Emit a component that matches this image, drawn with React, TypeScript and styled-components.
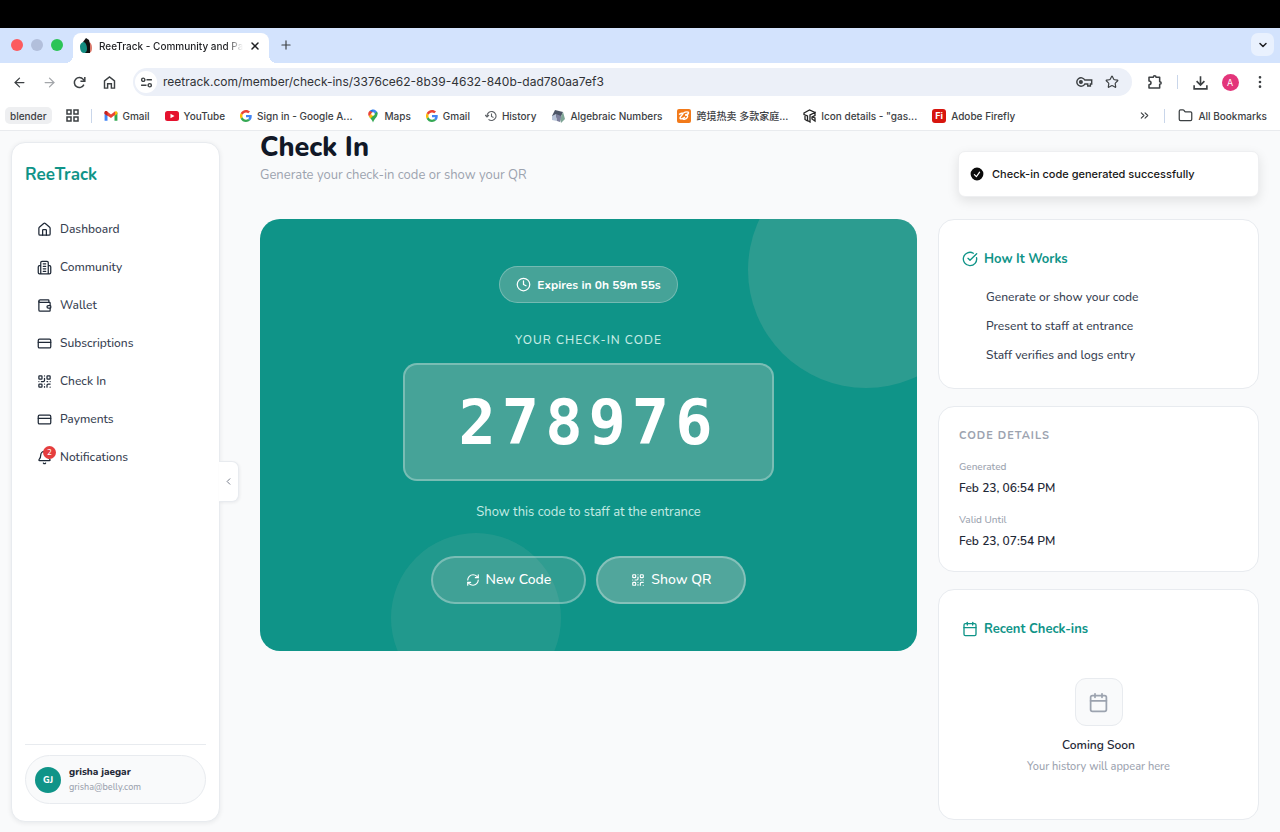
import React from "react";
import styled, { createGlobalStyle } from "styled-components";
import {
  ArrowLeft, ArrowRight, Bell, Calendar, ChevronDown, ChevronLeft, ChevronsRight, CircleCheckBig, Clock,
  CreditCard, EllipsisVertical, Folder, House, Plus, QrCode, RefreshCw, Star, Wallet, X,
} from "lucide-react";

const teal = "#0f9488";
const ink = "#1f2937";
const muted = "#9ca3af";
const line = "#e8ebef";
const glass = "255, 215, 207";

const GlobalStyle = createGlobalStyle`
  *, *::before, *::after { box-sizing: border-box; }
  body { margin: 0; background: #f9fafb; color: ${ink}; font: 500 12px/20px Nunito, Lato, sans-serif; }
  h1, h2, p, ul, ol, dl, dd { margin: 0; padding: 0; }
  ul, ol { list-style: none; }
  button, input { font: inherit; color: inherit; border: 0; background: none; padding: 0; }
  button { cursor: pointer; }
  a { color: inherit; text-decoration: none; }
  svg { flex: none; display: block; }
`;

const Screen = styled.div`
  min-height: 100vh;
  display: flex;
  flex-direction: column;
`;

/* ---------- browser window ---------- */
const Browser = styled.header`
  font-family: Inter, "Noto Sans CJK SC", sans-serif;
  font-weight: 400;
  color: #3c4043;
  background: #fff;
  border-bottom: 1px solid #e9ebee;
`;
const MenuBar = styled.div`
  height: 28px;
  background: #000;
`;
const TabStrip = styled.div`
  height: 35px;
  padding: 5px 6px 0 11px;
  display: flex;
  background: #d3e3fd;
`;
const Lights = styled.div`
  display: flex;
  gap: 8px;
  padding-top: 6px;
  margin-right: 10px;
`;
const Light = styled.span<{ $color: string }>`
  width: 12px;
  height: 12px;
  border-radius: 50%;
  background: ${(p) => p.$color};
`;
const Tab = styled.div`
  position: relative;
  width: 196px;
  height: 30px;
  padding: 0 8px 4px 6px;
  display: flex;
  align-items: center;
  gap: 6px;
  color: #1f2023;
  font-size: 10px;
  font-weight: 500;
  background: #fff;
  border-radius: 8px 8px 0 0;
  &::before, &::after {
    content: "";
    position: absolute;
    bottom: 0;
    width: 8px;
    height: 8px;
  }
  &::before { right: 100%; background: radial-gradient(circle at 0 0, transparent 8px, #fff 8px); }
  &::after { left: 100%; background: radial-gradient(circle at 100% 0, transparent 8px, #fff 8px); }
`;
const TabTitle = styled.span`
  flex: 1;
  min-width: 0;
  white-space: nowrap;
  mask-image: linear-gradient(to right, #000 88%, transparent);
`;
const PlainButton = styled.button`
  display: grid;
  place-items: center;
`;
const NewTab = styled(PlainButton)`
  width: 24px;
  height: 24px;
  margin-left: 5px;
`;
const TabSearch = styled(PlainButton)`
  width: 23px;
  height: 23px;
  margin-left: auto;
  color: #1f2023;
  background: #e9f1fe;
  border-radius: 7px;
`;
const Toolbar = styled.div`
  height: 38px;
  padding: 0 5px 0 4px;
  display: flex;
  align-items: center;
`;
const ToolButton = styled.button<{ $dim?: boolean }>`
  width: 30px;
  height: 28px;
  display: grid;
  place-items: center;
  color: ${(p) => (p.$dim ? "#a3a6aa" : "#3c4043")};
`;
const AddressBar = styled.div`
  flex: 1;
  height: 28px;
  margin: 0 8px 0 9px;
  padding: 0 7px 0 2px;
  display: flex;
  align-items: center;
  background: #ecf0f8;
  border-radius: 14px;
`;
const SiteInfo = styled(PlainButton)`
  width: 22px;
  height: 22px;
  margin-right: 6px;
  background: #fff;
  border-radius: 50%;
`;
const Address = styled.input`
  flex: 1;
  min-width: 0;
  color: #303236;
  font-size: 12px;
  line-height: 20px;
  outline: none;
`;
const AddressAction = styled(PlainButton)`
  width: 27px;
  height: 24px;
`;
const Rule = styled.span`
  width: 1px;
  height: 14px;
  margin: 0 7px;
  background: #c9d6ea;
`;
const ProfileDot = styled.span`
  width: 17px;
  height: 17px;
  display: grid;
  place-items: center;
  color: #fff;
  font-size: 9px;
  line-height: 17px;
  background: #e3357a;
  border-radius: 50%;
`;
const BookmarkBar = styled.nav`
  height: 29px;
  padding: 0 13px 0 5px;
  display: flex;
  align-items: center;
  font-size: 10px;
  font-weight: 500;
  line-height: 16px;
  white-space: nowrap;
`;
const GroupChip = styled.button`
  height: 17px;
  padding: 0 5px;
  margin-right: 14px;
  background: #eeeff1;
  border-radius: 5px;
`;
const AppsButton = styled(PlainButton)`
  margin-right: 5px;
`;
const BookmarkList = styled.ul`
  display: flex;
  gap: 15px;
  margin-left: 5px;
`;
const Bookmark = styled.a`
  display: flex;
  align-items: center;
  gap: 5px;
`;
const BarEnd = styled.div`
  margin-left: auto;
  display: flex;
  align-items: center;
  gap: 6px;
`;

/* ---------- application ---------- */
const Page = styled.div`
  position: relative;
  flex: 1;
  padding: 11px 21px 10px 11px;
  display: flex;
  gap: 40px;
`;
const Sidebar = styled.aside`
  position: relative;
  flex: none;
  width: 209px;
  padding: 22px 13px 17px;
  display: flex;
  flex-direction: column;
  background: #fff;
  border: 1px solid ${line};
  border-radius: 14px;
  box-shadow: 0 1px 5px rgba(15, 23, 42, 0.08);
`;
const Brand = styled.a`
  color: ${teal};
  font-size: 17px;
  line-height: 20px;
  font-weight: 700;
`;
const NavList = styled.ul`
  margin-top: 25px;
`;
const NavLink = styled.a`
  height: 38px;
  padding-left: 12px;
  display: flex;
  align-items: center;
  gap: 8px;
  color: #374151;
  svg { color: ${ink}; }
`;
const BellBox = styled.span`
  position: relative;
`;
const Count = styled.span`
  position: absolute;
  top: -4px;
  right: -4px;
  width: 13px;
  height: 13px;
  color: #fff;
  font-size: 8px;
  line-height: 13px;
  text-align: center;
  background: #e53e3e;
  border-radius: 50%;
`;
const CollapseButton = styled.button`
  position: absolute;
  left: 100%;
  top: 318px;
  width: 20px;
  height: 41px;
  display: grid;
  place-items: center;
  color: #6b7280;
  background: #fff;
  border: 1px solid ${line};
  border-left: 0;
  border-radius: 0 7px 7px 0;
  box-shadow: 1px 1px 3px rgba(15, 23, 42, 0.06);
`;
const Account = styled.div`
  margin-top: auto;
  padding-top: 10px;
  border-top: 1px solid ${line};
`;
const AccountButton = styled.button`
  width: 100%;
  height: 49px;
  padding: 0 9px;
  display: flex;
  align-items: center;
  gap: 8px;
  text-align: left;
  background: #f9fafb;
  border: 1px solid ${line};
  border-radius: 25px;
`;
const Avatar = styled.span`
  width: 26px;
  height: 26px;
  color: #fff;
  font-size: 9px;
  font-weight: 800;
  line-height: 26px;
  text-align: center;
  background: ${teal};
  border-radius: 50%;
`;
const AccountName = styled.span`
  display: block;
  font-size: 10px;
  line-height: 15px;
  font-weight: 800;
`;
const AccountMail = styled.span`
  display: block;
  color: ${muted};
  font-size: 9px;
  line-height: 15px;
`;
const Main = styled.main`
  flex: 1;
  min-width: 0;
`;
const Title = styled.h1`
  margin-top: -10px;
  color: #111827;
  font-size: 27px;
  line-height: 32px;
  font-weight: 800;
`;
const Subtitle = styled.p`
  margin-top: 1px;
  color: ${muted};
  font-size: 13px;
  font-weight: 400;
`;
const Columns = styled.div`
  margin-top: 34px;
  display: grid;
  grid-template-columns: minmax(0, 1fr) 321px;
  gap: 21px;
  align-items: start;
`;
const Hero = styled.section`
  position: relative;
  overflow: hidden;
  padding: 47px 20px;
  display: flex;
  flex-direction: column;
  align-items: center;
  color: #fff;
  background: ${teal};
  border-radius: 20px;
  > * { position: relative; }
`;
const Bubble = styled.span<{ $corner: "top" | "bottom" }>`
  && { position: absolute; }
  border-radius: 50%;
  ${(p) =>
    p.$corner === "top"
      ? `top: -67px; right: -67px; width: 236px; height: 236px; background: rgba(${glass}, 0.12);`
      : `bottom: -52px; left: 20%; width: 170px; height: 170px; background: rgba(${glass}, 0.08);`}
`;
const Expiry = styled.p`
  height: 37px;
  padding: 0 16px;
  display: flex;
  align-items: center;
  gap: 6px;
  font-weight: 700;
  background: rgba(${glass}, 0.23);
  border: 1px solid rgba(255, 255, 255, 0.25);
  border-radius: 19px;
`;
const CodeLabel = styled.p`
  margin-top: 27px;
  color: #c5ebe4;
  letter-spacing: 1px;
`;
const Code = styled.output`
  margin-top: 13px;
  padding: 22px 54px 20px;
  font: 700 62px/72px "DejaVu Sans Mono", monospace;
  letter-spacing: 6px;
  background: rgba(${glass}, 0.23);
  border: 2px solid rgba(255, 255, 255, 0.28);
  border-radius: 14px;
`;
const Hint = styled.p`
  margin-top: 21px;
  color: #c5ebe4;
  font-size: 13px;
  font-weight: 400;
`;
const Actions = styled.div`
  margin-top: 34px;
  display: flex;
  gap: 10px;
`;
const ActionButton = styled.button<{ $strong?: boolean }>`
  height: 48px;
  padding: 0 33px;
  display: flex;
  align-items: center;
  gap: 6px;
  font-size: 14px;
  background: rgba(${glass}, ${(p) => (p.$strong ? 0.28 : 0.14)});
  border: 2px solid rgba(255, 255, 255, 0.3);
  border-radius: 24px;
`;
const Aside = styled.div`
  display: grid;
  gap: 17px;
`;
const Card = styled.section`
  padding: 29px 23px 23px;
  background: #fff;
  border: 1px solid ${line};
  border-radius: 16px;
`;
const DetailCard = styled(Card)`
  padding: 19px 20px 20px;
`;
const CardTitle = styled.h2`
  display: flex;
  align-items: center;
  gap: 6px;
  color: ${teal};
  font-size: 13px;
  line-height: 20px;
  font-weight: 700;
`;
const Steps = styled.ol`
  margin-top: 18px;
  padding-left: 24px;
  display: grid;
  gap: 9px;
  color: #374151;
`;
const DetailTitle = styled.h2`
  color: ${muted};
  font-size: 11px;
  line-height: 20px;
  font-weight: 700;
  letter-spacing: 1px;
`;
const Details = styled.dl`
  margin-top: 12px;
  dt { color: ${muted}; font-size: 10px; line-height: 18px; }
  dd { margin-top: 2px; font-weight: 600; }
  dd + dt { margin-top: 13px; }
`;
const Empty = styled.div`
  padding: 39px 0 19px;
  display: flex;
  flex-direction: column;
  align-items: center;
`;
const EmptyIcon = styled.div`
  width: 48px;
  height: 48px;
  display: grid;
  place-items: center;
  color: ${muted};
  background: #f9fafb;
  border: 1px solid ${line};
  border-radius: 11px;
`;
const EmptyTitle = styled.p`
  margin-top: 9px;
  font-weight: 600;
`;
const EmptyText = styled.p`
  margin-top: 2px;
  color: ${muted};
  font-size: 11px;
`;
const Toast = styled.div`
  position: absolute;
  top: 20px;
  right: 21px;
  width: 301px;
  height: 46px;
  padding: 0 10px;
  display: flex;
  align-items: center;
  gap: 7px;
  color: #171717;
  font: 500 11px/18px Inter, sans-serif;
  background: #fff;
  border: 1px solid #eeeff1;
  border-radius: 7px;
  box-shadow: 0 4px 12px rgba(0, 0, 0, 0.1);
`;

/* ---------- drawings ---------- */
const SiteLogo = () => (
  <svg width="14" height="16" viewBox="0 0 14 16">
    <path d="M9 4c3 0 4 3 4 6 0 3-1 5-4 5z" fill="#d9796b" />
    <path d="M7 0l3 2 1 4v9H6L4 4z" fill="#111" />
    <path d="M1 8c0-2 2-4 4-4 2 1 3 4 3 7 0 2-1 4-3 4-3 0-4-3-4-7z" fill="#128c80" />
  </svg>
);
const ReloadIcon = () => (
  <svg width="15" height="15" viewBox="0 0 24 24" fill="none" stroke="currentColor" strokeWidth="2.4">
    <path d="M19 15.5A8 8 0 1 1 18 7l2 2.5" />
    <path d="M20.5 3v7h-7" />
  </svg>
);
const HomeIcon = () => (
  <svg width="15" height="15" viewBox="0 0 24 24" fill="none" stroke="currentColor" strokeWidth="2.3">
    <path d="M4 21V9.5L12 3l8 6.500V21h-5v-7H9v7z" />
  </svg>
);
const TuneIcon = () => (
  <svg width="13" height="13" viewBox="0 0 24 24" fill="none" stroke="currentColor" strokeWidth="2.6">
    <circle cx="6" cy="7" r="3" /><path d="M12 7h10M2 17h10" /><circle cx="18" cy="17" r="3" />
  </svg>
);
const KeyIcon = () => (
  <svg width="17" height="12" viewBox="0 0 26 18" fill="none" stroke="currentColor" strokeWidth="2.200">
    <path d="M13.500 6H24v6h-2v3h-4v-3h-4.500A6.500 6.500 0 1 1 13.500 6z" /><circle cx="7.500" cy="9" r="2" fill="currentColor" />
  </svg>
);
const PuzzleIcon = () => (
  <svg width="16" height="16" viewBox="0 0 24 24" fill="none" stroke="currentColor" strokeWidth="2.300" strokeLinejoin="round">
    <path d="M3 5h6.500c0-3 4-3 4 0H19v6.500c3 0 3 4 0 4V21H3v-5c4 0 4-5.500 0-5.500z" />
  </svg>
);
const DownloadIcon = () => (
  <svg width="17" height="17" viewBox="0 0 24 24" fill="none" stroke="currentColor" strokeWidth="2.300">
    <path d="M12 3v12M6.500 10l5.500 5.500L17.500 10M3 16v5h18v-5" />
  </svg>
);
const AppsIcon = () => (
  <svg width="13" height="13" viewBox="0 0 13 13" fill="none" stroke="currentColor" strokeWidth="1.500">
    <path d="M1 1h4v4H1zM8 1h4v4H8zM1 8h4v4H1zM8 8h4v4H8z" />
  </svg>
);
const GmailIcon = () => (
  <svg width="14" height="14" viewBox="0 0 24 24">
    <path d="M1 20V6l5 4v10z" fill="#4285f4" /><path d="M18 20V10l5-4v14z" fill="#34a853" />
    <path d="M18 5l2-1c2-1 3 1 3 2v2l-5 4z" fill="#fbbc04" /><path d="M1 8V6c0-2 2-3 4-2l7 5.500L19 4v6l-7 5.500z" fill="#ea4335" />
    <path d="M1 8V6c0-2 2-3 4-2l1 1v7z" fill="#c5221f" />
  </svg>
);
const YouTubeIcon = () => (
  <svg width="14" height="14" viewBox="0 0 28 28">
    <rect y="4" width="28" height="20" rx="5" fill="#e5122e" /><path d="M11 9.500v9l8-4.500z" fill="#fff" />
  </svg>
);
const GoogleIcon = () => (
  <svg width="12" height="12" viewBox="0 0 48 48">
    <path fill="#ea4335" d="M24 9.500c3.500 0 6.700 1.200 9.200 3.600l6.900-6.900C35.900 2.400 30.500 0 24 0 14.600 0 6.500 5.400 2.600 13.200l8 6.200C12.400 13.700 17.700 9.500 24 9.500z" />
    <path fill="#4285f4" d="M47 24.600c0-1.600-.2-3.100-.4-4.600H24v9h12.900c-.6 3-2.300 5.500-4.800 7.200l7.700 6c4.500-4.200 7.200-10.400 7.200-17.600z" />
    <path fill="#fbbc05" d="M10.500 28.600a14.500 14.500 0 0 1 0-9.200l-8-6.200a24 24 0 0 0 0 21.600z" />
    <path fill="#34a853" d="M24 48c6.500 0 11.900-2.100 15.900-5.800l-7.700-6c-2.200 1.500-4.900 2.300-8.200 2.300-6.300 0-11.600-4.200-13.500-9.900l-8 6.200C6.500 42.600 14.600 48 24 48z" />
  </svg>
);
const MapsIcon = () => (
  <svg width="12" height="14" viewBox="0 0 24 28">
    <path d="M12 1a9 9 0 0 0-7 3l7 7z" fill="#1a73e8" /><path d="M5 4a9 9 0 0 0-1 11l8-9z" fill="#ea4335" />
    <path d="M12 1c6 0 9 5 9 9l-9 1-2-4z" fill="#4285f4" /><path d="M4 15l8-3 8-7c2 4 1 8-1 11-3 4-5 6-7 11-1-4-5-8-8-12z" fill="#34a853" />
    <path d="M4 15l8-9 3 5-8 8z" fill="#fbbc04" /><circle cx="12" cy="10" r="3.500" fill="#fff" />
  </svg>
);
const HistoryIcon = () => (
  <svg width="12" height="12" viewBox="0 0 24 24" fill="none" stroke="#5f6368" strokeWidth="2.200">
    <path d="M4 12a9 9 0 1 1 3 6.700M0 10l4 4 4-4M13 7v6l4 2" />
  </svg>
);
const AlgebraIcon = () => (
  <svg width="14" height="14" viewBox="0 0 14 14">
    <path d="M4 1l8 2-3 7-8-3z" fill="#4c5566" /><path d="M12 3l2 7-4 4-1-4z" fill="#7fa596" />
    <path d="M1 7l4-2 1 7-5-1z" fill="#b8c4d8" /><path d="M5 5l5 2-1 6-3-1z" fill="#7c7f9c" />
  </svg>
);
const AlibabaIcon = () => (
  <svg width="14" height="14" viewBox="0 0 14 14">
    <rect width="14" height="14" rx="2" fill="#f27a1a" />
    <path d="M2 5.500c2-1.500 4-1.500 4-1 0 1-3 3-3 4.500 0 1.500 3 1 5-1M6.500 4c2-1.500 5.500-1.500 5 0-.3 1.500-2.500 2-3.500 2 2.500 0 3 .8 2.500 2-.8 2-3 2.500-4.500 2" fill="none" stroke="#fff" strokeWidth="1.400" />
  </svg>
);
const CubeIcon = () => (
  <svg width="13" height="14" viewBox="0 0 26 28" fill="none" stroke="#222" strokeWidth="2.600">
    <path d="M2 8l11-6 11 5-10 5v14l-5-3V14L2 11zM4 14v7l5 3M14 12l10-5v6l-6 3v4l6 4v-6l-5-2" />
  </svg>
);
const FireflyBadge = styled.span`
  width: 14px;
  height: 14px;
  color: #fff;
  font-size: 9px;
  font-weight: 700;
  line-height: 14px;
  text-align: center;
  background: #d7150e;
  border-radius: 3px;
`;
const CommunityIcon = () => (
  <svg width="15" height="15" viewBox="0 0 24 24" fill="none" stroke="currentColor" strokeWidth="2" strokeLinecap="round" strokeLinejoin="round">
    <path d="M6 22V4a2 2 0 0 1 2-2h8a2 2 0 0 1 2 2v18ZM6 9H4a2 2 0 0 0-2 2v9a2 2 0 0 0 2 2h2M18 9h2a2 2 0 0 1 2 2v9a2 2 0 0 1-2 2h-2M10 6h4M10 10h4M10 14h4M10 18h4" />
  </svg>
);
const ToastCheck = () => (
  <svg width="16" height="16" viewBox="0 0 20 20" fill="#0a0a0a">
    <path fillRule="evenodd" clipRule="evenodd" d="M10 18a8 8 0 1 0 0-16 8 8 0 0 0 0 16Zm3.857-9.809a.75.75 0 0 0-1.214-.882l-3.483 4.790-1.880-1.880a.75.75 0 1 0-1.060 1.061l2.500 2.500a.75.75 0 0 0 1.137-.089l4-5.500Z" />
  </svg>
);

const bookmarks: { label: string; icon: React.ReactNode }[] = [
  { label: "Gmail", icon: <GmailIcon /> },
  { label: "YouTube", icon: <YouTubeIcon /> },
  { label: "Sign in - Google A...", icon: <GoogleIcon /> },
  { label: "Maps", icon: <MapsIcon /> },
  { label: "Gmail", icon: <GoogleIcon /> },
  { label: "History", icon: <HistoryIcon /> },
  { label: "Algebraic Numbers", icon: <AlgebraIcon /> },
  { label: "跨境热卖 多款家庭...", icon: <AlibabaIcon /> },
  { label: "Icon details - \"gas...", icon: <CubeIcon /> },
  { label: "Adobe Firefly", icon: <FireflyBadge>Fi</FireflyBadge> },
];

const navItems: { label: string; icon: React.ReactNode }[] = [
  { label: "Dashboard", icon: <House size={15} /> },
  { label: "Community", icon: <CommunityIcon /> },
  { label: "Wallet", icon: <Wallet size={15} /> },
  { label: "Subscriptions", icon: <CreditCard size={15} /> },
  { label: "Check In", icon: <QrCode size={15} /> },
  { label: "Payments", icon: <CreditCard size={15} /> },
  { label: "Notifications", icon: <BellBox><Bell size={15} /><Count>2</Count></BellBox> },
];

const steps = ["Generate or show your code", "Present to staff at entrance", "Staff verifies and logs entry"];

export default function App() {
  return (
    <Screen>
      <GlobalStyle />
      <Browser>
        <MenuBar />
        <TabStrip>
          <Lights><Light $color="#fc5b5e" /><Light $color="#b2bfdb" /><Light $color="#2bc455" /></Lights>
          <Tab>
            <SiteLogo />
            <TabTitle>ReeTrack - Community and Pa</TabTitle>
            <PlainButton aria-label="Close tab"><X size={12} strokeWidth={3} /></PlainButton>
          </Tab>
          <NewTab aria-label="New tab"><Plus size={14} /></NewTab>
          <TabSearch aria-label="Search tabs"><ChevronDown size={12} strokeWidth={3} /></TabSearch>
        </TabStrip>
        <Toolbar>
          <ToolButton aria-label="Back"><ArrowLeft size={15} /></ToolButton>
          <ToolButton aria-label="Forward" $dim><ArrowRight size={15} /></ToolButton>
          <ToolButton aria-label="Reload"><ReloadIcon /></ToolButton>
          <ToolButton aria-label="Home"><HomeIcon /></ToolButton>
          <AddressBar>
            <SiteInfo aria-label="Site information"><TuneIcon /></SiteInfo>
            <Address aria-label="Address" defaultValue="reetrack.com/member/check-ins/3376ce62-8b39-4632-840b-dad780aa7ef3" />
            <AddressAction aria-label="Passwords"><KeyIcon /></AddressAction>
            <AddressAction aria-label="Bookmark this page"><Star size={14} /></AddressAction>
          </AddressBar>
          <ToolButton aria-label="Extensions"><PuzzleIcon /></ToolButton>
          <Rule />
          <ToolButton aria-label="Downloads"><DownloadIcon /></ToolButton>
          <ToolButton aria-label="Profile"><ProfileDot>A</ProfileDot></ToolButton>
          <ToolButton aria-label="Menu"><EllipsisVertical size={16} strokeWidth={2} /></ToolButton>
        </Toolbar>
        <BookmarkBar aria-label="Bookmarks">
          <GroupChip>blender</GroupChip>
          <AppsButton aria-label="Apps"><AppsIcon /></AppsButton>
          <Rule />
          <BookmarkList>
            {bookmarks.map((b, i) => (
              <li key={i}><Bookmark href="#">{b.icon}{b.label}</Bookmark></li>
            ))}
          </BookmarkList>
          <BarEnd>
            <PlainButton aria-label="More bookmarks"><ChevronsRight size={13} /></PlainButton>
            <Rule />
            <Bookmark href="#"><Folder size={15} />All Bookmarks</Bookmark>
          </BarEnd>
        </BookmarkBar>
      </Browser>

      <Page>
        <Sidebar>
          <Brand href="#">ReeTrack</Brand>
          <nav>
            <NavList>
              {navItems.map((n) => (
                <li key={n.label}><NavLink href="#">{n.icon}{n.label}</NavLink></li>
              ))}
            </NavList>
          </nav>
          <Account>
            <AccountButton>
              <Avatar>GJ</Avatar>
              <span>
                <AccountName>grisha jaegar</AccountName>
                <AccountMail>grisha@belly.com</AccountMail>
              </span>
            </AccountButton>
          </Account>
          <CollapseButton aria-label="Collapse sidebar"><ChevronLeft size={11} /></CollapseButton>
        </Sidebar>

        <Main>
          <Title>Check In</Title>
          <Subtitle>Generate your check-in code or show your QR</Subtitle>
          <Columns>
            <Hero>
              <Bubble $corner="top" />
              <Bubble $corner="bottom" />
              <Expiry><Clock size={15} />Expires in 0h 59m 55s</Expiry>
              <CodeLabel>YOUR CHECK-IN CODE</CodeLabel>
              <Code>278976</Code>
              <Hint>Show this code to staff at the entrance</Hint>
              <Actions>
                <ActionButton><RefreshCw size={14} />New Code</ActionButton>
                <ActionButton $strong><QrCode size={14} />Show QR</ActionButton>
              </Actions>
            </Hero>
            <Aside>
              <Card>
                <CardTitle><CircleCheckBig size={16} />How It Works</CardTitle>
                <Steps>{steps.map((s) => <li key={s}>{s}</li>)}</Steps>
              </Card>
              <DetailCard>
                <DetailTitle>CODE DETAILS</DetailTitle>
                <Details>
                  <dt>Generated</dt><dd>Feb 23, 06:54 PM</dd>
                  <dt>Valid Until</dt><dd>Feb 23, 07:54 PM</dd>
                </Details>
              </DetailCard>
              <Card>
                <CardTitle><Calendar size={16} />Recent Check-ins</CardTitle>
                <Empty>
                  <EmptyIcon><Calendar size={21} /></EmptyIcon>
                  <EmptyTitle>Coming Soon</EmptyTitle>
                  <EmptyText>Your history will appear here</EmptyText>
                </Empty>
              </Card>
            </Aside>
          </Columns>
        </Main>
        <Toast role="status"><ToastCheck />Check-in code generated successfully</Toast>
      </Page>
    </Screen>
  );
}
